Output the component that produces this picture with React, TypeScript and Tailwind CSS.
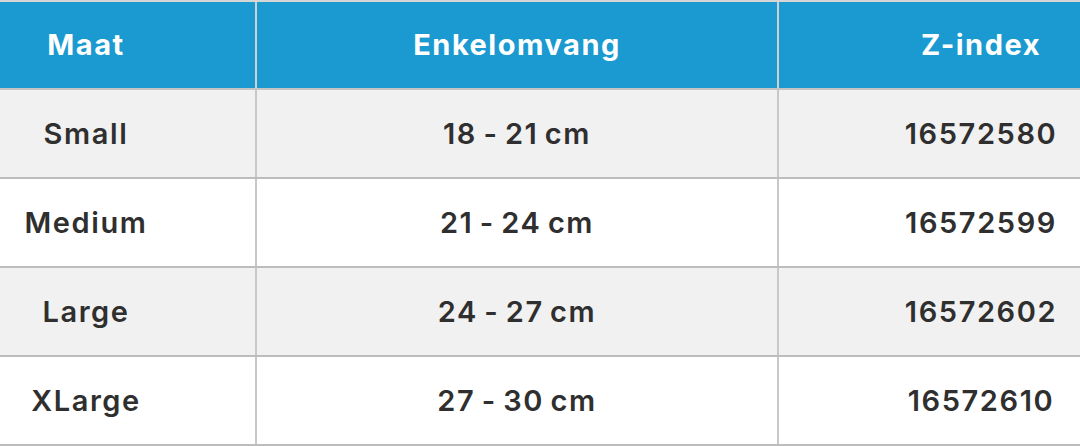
import React from "react";

const rows = [
  { maat: "Small", omvang: "18 - 21 cm", z: "16572580", bg: "bg-[#f1f1f1]" },
  { maat: "Medium", omvang: "21 - 24 cm", z: "16572599", bg: "bg-white" },
  { maat: "Large", omvang: "24 - 27 cm", z: "16572602", bg: "bg-[#f1f1f1]" },
  { maat: "XLarge", omvang: "27 - 30 cm", z: "16572610", bg: "bg-white" },
];

export default function App() {
  return (
    <div className="w-[1080px] h-[446px] overflow-hidden bg-white" style={{ fontFamily: 'Inter, "Liberation Sans", sans-serif' }}>
      <div className="ml-[-83px] w-[1266px] border-t-2 border-[#d6d6d6]">
        <div className="grid grid-cols-[340px_522px_404px] h-[88px] bg-[#1a9ad0] text-white font-bold text-[29px] tracking-[1.5px] border-b-2 border-[#c4c4c4]">
          <div className="flex items-center justify-center border-r-2 border-[#cfcfcf]">Maat</div>
          <div className="flex items-center justify-center border-r-2 border-[#cfcfcf]">Enkelomvang</div>
          <div className="flex items-center justify-center">Z-index</div>
        </div>
        {rows.map((r) => (
          <div key={r.maat} className={`grid grid-cols-[340px_522px_404px] h-[89px] ${r.bg} text-[#2f2f2f] font-semibold text-[29px] tracking-[1.6px] [word-spacing:-2.5px] border-b-2 border-[#bdbdbd]`}>
            <div className="flex items-center justify-center border-r-2 border-[#c8c8c8]">{r.maat}</div>
            <div className="flex items-center justify-center border-r-2 border-[#c8c8c8]">{r.omvang}</div>
            <div className="flex items-center justify-center">{r.z}</div>
          </div>
        ))}
      </div>
    </div>
  );
}
